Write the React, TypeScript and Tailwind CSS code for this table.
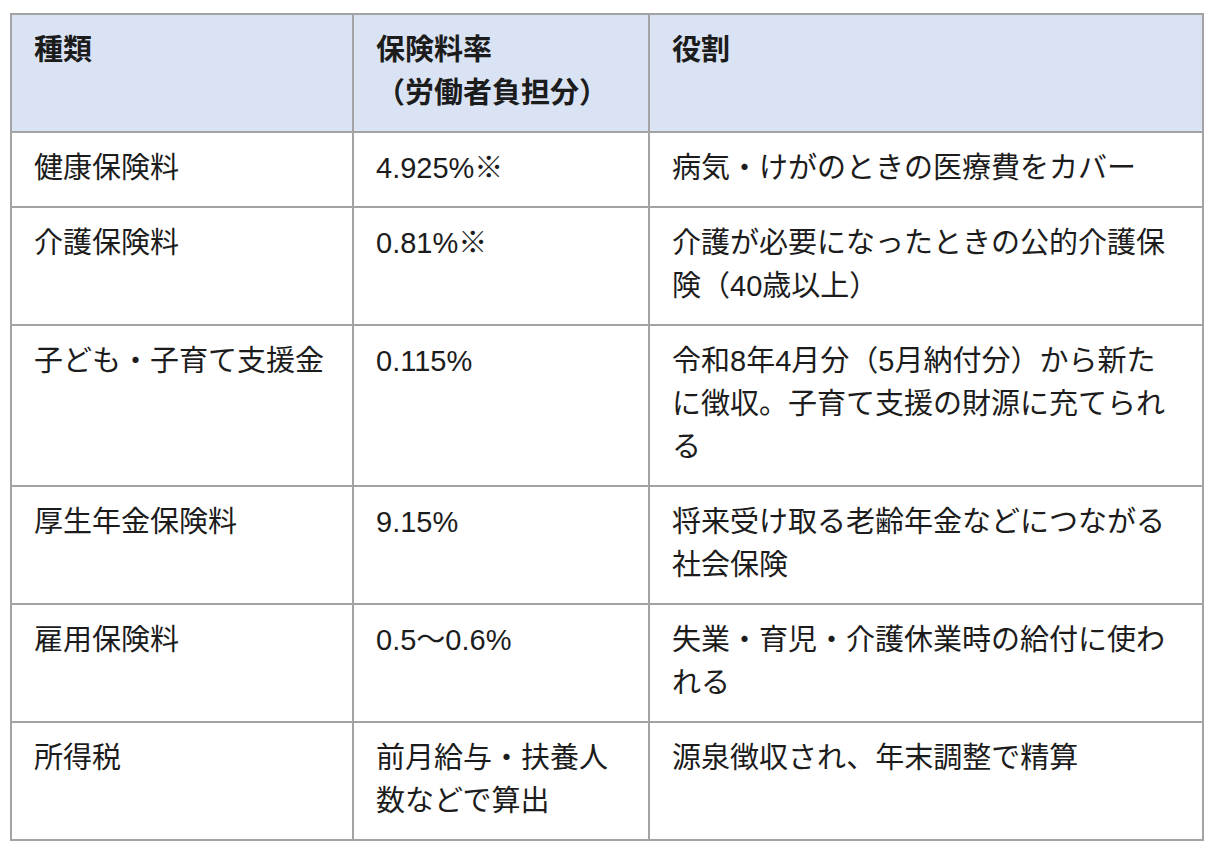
const rows: { kind: string; rate: string; role: string }[] = [
  { kind: "健康保険料", rate: "4.925%※", role: "病気・けがのときの医療費をカバー" },
  { kind: "介護保険料", rate: "0.81%※", role: "介護が必要になったときの公的介護保険（40歳以上）" },
  { kind: "子ども・子育て支援金", rate: "0.115%", role: "令和8年4月分（5月納付分）から新たに徴収。子育て支援の財源に充てられる" },
  { kind: "厚生年金保険料", rate: "9.15%", role: "将来受け取る老齢年金などにつながる社会保険" },
  { kind: "雇用保険料", rate: "0.5〜0.6%", role: "失業・育児・介護休業時の給付に使われる" },
  { kind: "所得税", rate: "前月給与・扶養人数などで算出", role: "源泉徴収され、年末調整で精算" },
];

const cell = "border-2 border-[#a3a3a3] align-top pl-[22px] pr-[20px] pt-[14px] pb-[16px]";

export default function App() {
  return (
    <div className="min-h-screen bg-white pt-[13px] pl-[10px] font-['Liberation_Sans','Noto_Sans_CJK_JP',sans-serif] text-[29px] leading-[43px] text-[#1c1c1c]">
      <table className="table-fixed border-collapse w-[1192px]">
        <colgroup>
          <col className="w-[342px]" />
          <col className="w-[296px]" />
          <col className="w-[554px]" />
        </colgroup>
        <thead>
          <tr className="bg-[#dae3f3] text-left">
            <th className={cell + " font-bold"}>種類</th>
            <th className={cell + " font-bold"}>
              保険料率
              <br />
              （労働者負担分）
            </th>
            <th className={cell + " font-bold"}>役割</th>
          </tr>
        </thead>
        <tbody>
          {rows.map((r) => (
            <tr key={r.kind}>
              <td className={cell}>{r.kind}</td>
              <td className={cell}>{r.rate}</td>
              <td className={cell}>{r.role}</td>
            </tr>
          ))}
        </tbody>
      </table>
    </div>
  );
}
